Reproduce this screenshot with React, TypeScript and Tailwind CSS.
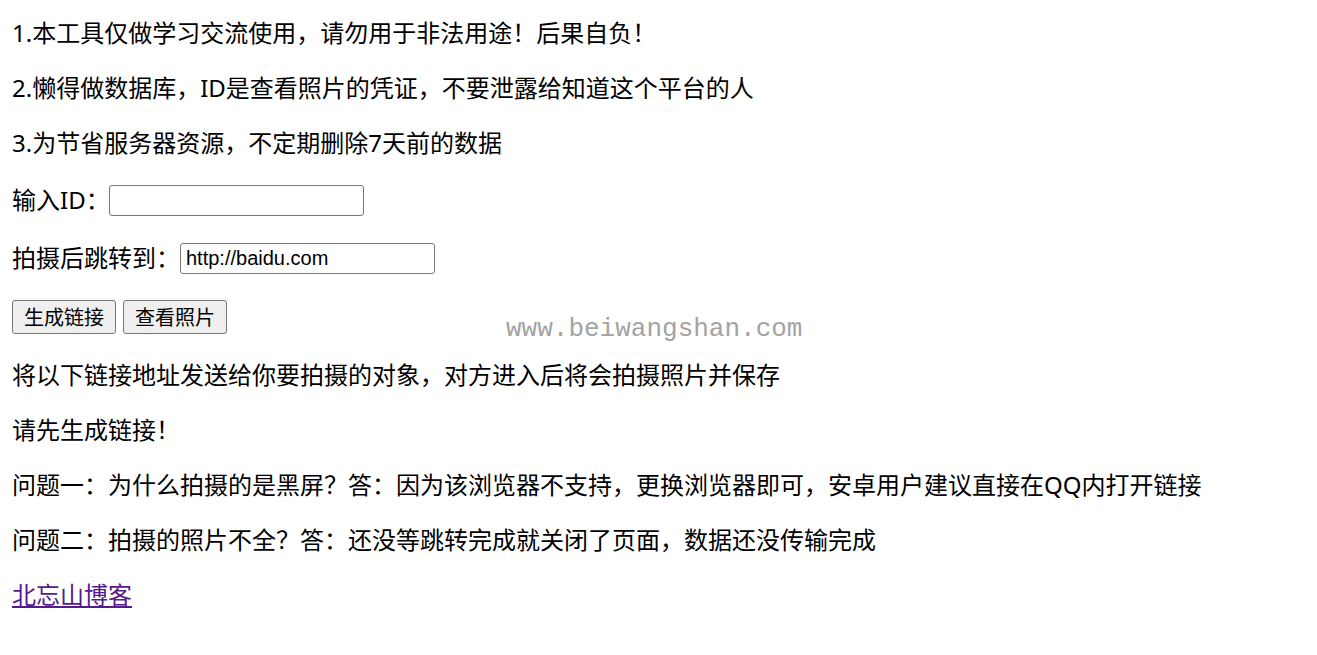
import React from "react";

const notes = [
  "1.本工具仅做学习交流使用，请勿用于非法用途！后果自负！",
  "2.懒得做数据库，ID是查看照片的凭证，不要泄露给知道这个平台的人",
  "3.为节省服务器资源，不定期删除7天前的数据",
];

const faq = [
  "问题一：为什么拍摄的是黑屏？答：因为该浏览器不支持，更换浏览器即可，安卓用户建议直接在QQ内打开链接",
  "问题二：拍摄的照片不全？答：还没等跳转完成就关闭了页面，数据还没传输完成",
];

const inputCls =
  "h-[31px] w-[255px] rounded-[3px] border border-[#767676] bg-white px-[5px] font-['Liberation_Sans',Arial,sans-serif] text-[20px] text-black outline-none";

const buttonCls =
  "h-[34px] rounded-[3px] border border-[#767676] bg-[#efefef] px-[11px] pt-px text-[20px] leading-none text-black";

export default function App() {
  return (
    <div className="relative min-h-[655px] w-full bg-white pl-3 pt-[17px] font-['Noto_Sans','Noto_Sans_CJK_SC',sans-serif] text-[24px] leading-[31px] text-black">
      {notes.map((text, i) => (
        <p key={i} className={i === 0 ? "" : "mt-6"}>
          {text}
        </p>
      ))}

      <div className="mt-[27px] flex h-[31px] items-center">
        <span className="mb-[3px]">输入ID：</span>
        <input type="text" className={inputCls + " -ml-px"} />
      </div>

      <div className="mt-[27px] flex h-[31px] items-center">
        <span className="mb-[2px]">拍摄后跳转到：</span>
        <input type="text" defaultValue="http://baidu.com" className={inputCls} />
      </div>

      <div className="mt-[26px] flex gap-[7px]">
        <button className={buttonCls}>生成链接</button>
        <button className={buttonCls}>查看照片</button>
      </div>

      <p className="mt-[25px]">将以下链接地址发送给你要拍摄的对象，对方进入后将会拍摄照片并保存</p>
      <p className="mt-6">请先生成链接！</p>
      {faq.map((text, i) => (
        <p key={i} className="mt-6">
          {text}
        </p>
      ))}
      <p className="mt-6">
        <a href="#" className="text-[#551a8b] underline">
          北忘山博客
        </a>
      </p>

      {/* watermark over the page */}
      <div className="pointer-events-none absolute left-[506px] top-[316px] font-['Liberation_Mono',monospace] text-[26px] leading-[26px] text-[#a3a3a3]">
        www.beiwangshan.com
      </div>
    </div>
  );
}
